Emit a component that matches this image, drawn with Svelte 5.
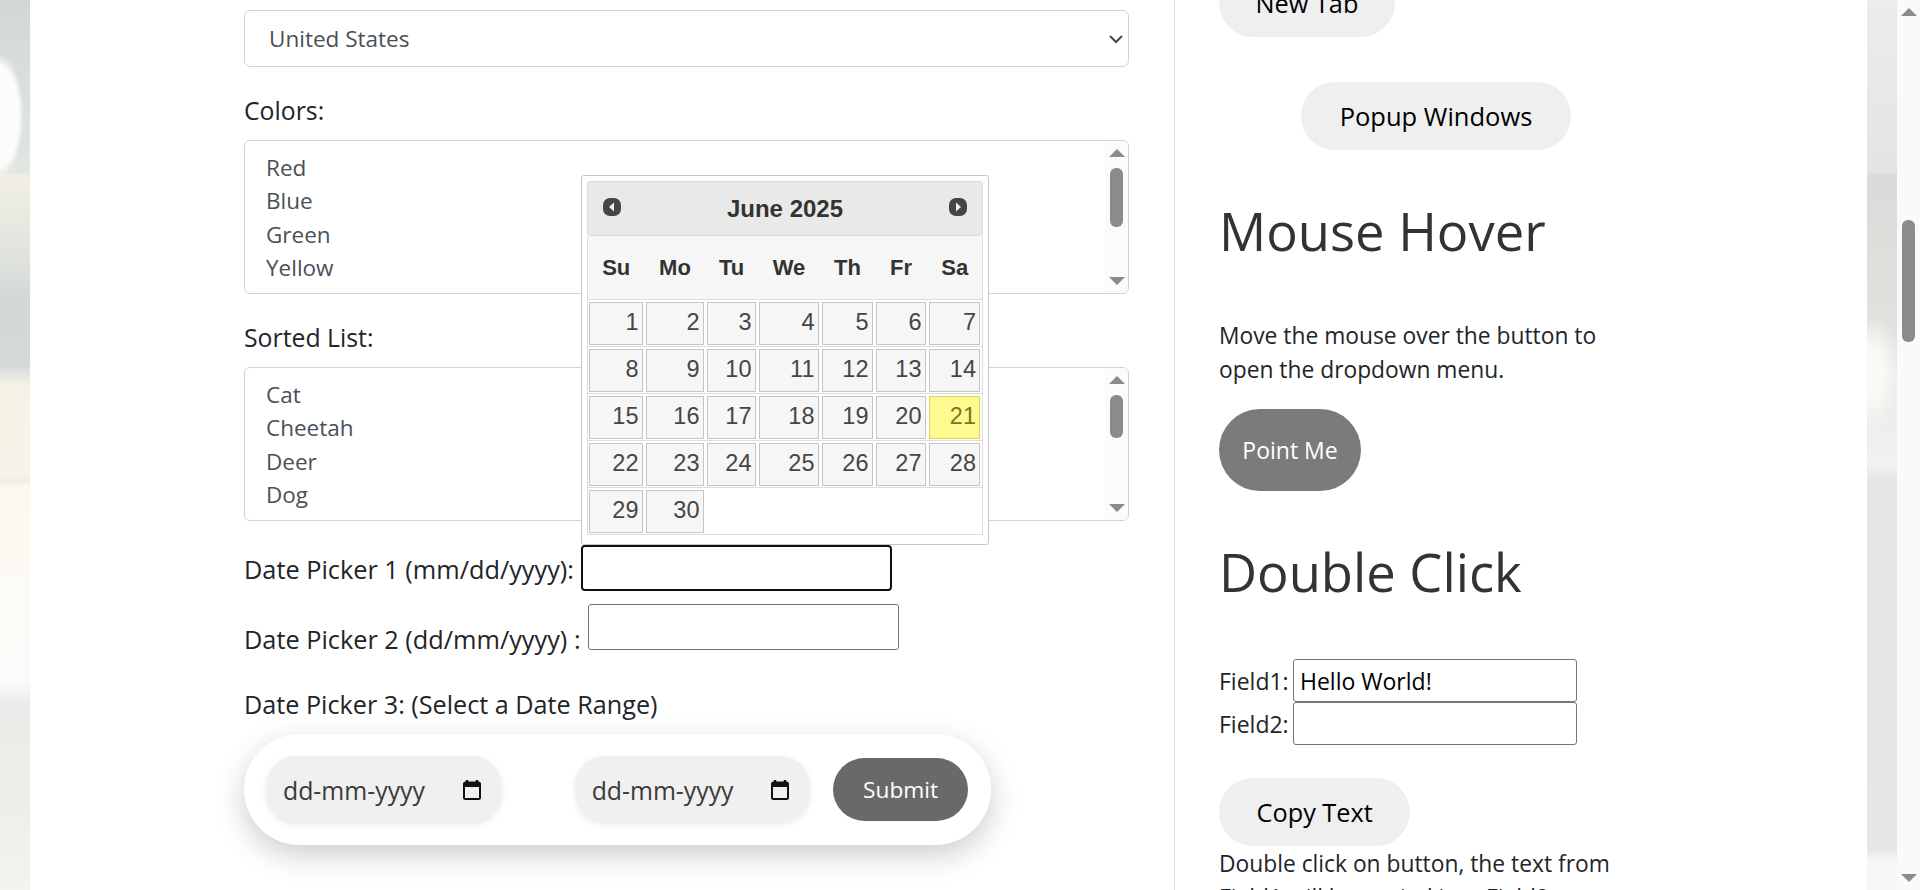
<script>
  const colors = ['Red', 'Blue', 'Green', 'Yellow', 'Pink'];
  const animals = ['Cat', 'Cheetah', 'Deer', 'Dog', 'Elephant'];
  const weekdays = ['Su', 'Mo', 'Tu', 'We', 'Th', 'Fr', 'Sa'];
  const colWidths = [57, 61, 52, 63, 54, 53, 55];

  // June 2025 starts on a Sunday, so the grid is just 1..30 in rows of seven
  const weeks = [];
  for (let d = 1; d <= 30; d += 7) {
    weeks.push(Array.from({ length: 7 }, (_, i) => (d + i <= 30 ? d + i : null)));
  }
</script>

<div class="screen">
  <div class="strip strip-left"></div>

  <main class="page">
    <section class="forms">
      <div class="select">
        <span>United States</span>
        <svg class="chevron" width="14" height="10" viewBox="0 0 14 10"><path d="M1 2l6 6 6-6" fill="none" stroke="#454b52" stroke-width="2"/></svg>
      </div>

      <div class="label">Colors:</div>
      <div class="listbox">
        <div class="options">
          {#each colors as c}<div>{c}</div>{/each}
        </div>
        <div class="mini-scroll">
          <i class="up"></i>
          <b class="thumb-a"></b>
          <i class="down"></i>
        </div>
      </div>

      <div class="label">Sorted List:</div>
      <div class="listbox">
        <div class="options">
          {#each animals as a}<div>{a}</div>{/each}
        </div>
        <div class="mini-scroll">
          <i class="up"></i>
          <b class="thumb-b"></b>
          <i class="down"></i>
        </div>
      </div>

      <div class="date-row first">
        <span>Date Picker 1 (mm/dd/yyyy):</span>
        <div class="text-input focused"></div>

        <div class="calendar">
          <div class="cal-head">
            <svg class="nav" width="20" height="20" viewBox="0 0 20 20"><rect x="1" y="1" width="18" height="18" rx="7" fill="#454545"/><path d="M12 5.500v9L7 10z" fill="#eee"/></svg>
            <span class="cal-title">June 2025</span>
            <svg class="nav" width="20" height="20" viewBox="0 0 20 20"><rect x="1" y="1" width="18" height="18" rx="7" fill="#454545"/><path d="M8 5.500v9l5-4.500z" fill="#eee"/></svg>
          </div>
          <table>
            <colgroup>
              {#each colWidths as w}<col style="width:{w}px" />{/each}
            </colgroup>
            <thead>
              <tr>{#each weekdays as d}<th>{d}</th>{/each}</tr>
            </thead>
            <tbody>
              {#each weeks as week}
                <tr>
                  {#each week as day}
                    <td>
                      {#if day}<a class:today={day === 21}>{day}</a>{/if}
                    </td>
                  {/each}
                </tr>
              {/each}
            </tbody>
          </table>
        </div>
      </div>

      <div class="date-row second">
        <span>Date Picker 2 (dd/mm/yyyy) :</span>
        <div class="text-input"></div>
      </div>

      <div class="label third">Date Picker 3: (Select a Date Range)</div>

      <div class="range">
        <div class="date-pill">
          <span>dd-mm-yyyy</span>
          <svg width="20" height="22" viewBox="0 0 20 22"><path d="M5 1v3M15 1v3" stroke="#111" stroke-width="2.500"/><rect x="2" y="3.500" width="16" height="16.500" rx="1.500" fill="none" stroke="#111" stroke-width="2"/><rect x="2" y="3.500" width="16" height="4.500" fill="#111"/></svg>
        </div>
        <div class="date-pill second-pill">
          <span>dd-mm-yyyy</span>
          <svg width="20" height="22" viewBox="0 0 20 22"><path d="M5 1v3M15 1v3" stroke="#111" stroke-width="2.500"/><rect x="2" y="3.500" width="16" height="16.500" rx="1.500" fill="none" stroke="#111" stroke-width="2"/><rect x="2" y="3.500" width="16" height="4.500" fill="#111"/></svg>
        </div>
        <div class="submit">Submit</div>
      </div>
    </section>

    <aside class="side">
      <div class="pill new-tab">New Tab</div>
      <div class="pill popup">Popup Windows</div>

      <h2 class="hover-title">Mouse Hover</h2>
      <p class="hover-text">Move the mouse over the button to open the dropdown menu.</p>
      <div class="point">Point Me</div>

      <h2 class="dbl-title">Double Click</h2>
      <div class="field-row"><span>Field1:</span><div class="field">Hello World!</div></div>
      <div class="field-row"><span>Field2:</span><div class="field"></div></div>
      <div class="pill copy">Copy Text</div>
      <p class="copy-text">Double click on button, the text from Field1 will be copied into Field2.</p>
    </aside>
  </main>

  <div class="strip strip-right"></div>

  <div class="scrollbar">
    <i class="up"></i>
    <b></b>
    <i class="down"></i>
  </div>
</div>

<style>
  :global(body) {
    margin: 0;
    background: #fff;
  }

  .screen {
    display: flex;
    height: 890px;
    overflow: hidden;
    font-family: "Open Sans", "Noto Sans", sans-serif;
    font-size: 22.500px;
    color: #212529;
  }

  /* blurred photo that shows behind the page */
  .strip {
    flex: 0 0 30px;
  }

  .strip-left {
    background:
      radial-gradient(ellipse 26px 62px at -2px 116px, #fbfdfb 0 80%, rgba(248, 252, 248, 0) 100%),
      linear-gradient(180deg, #d3d6d6 0, #d8dcdb 60px, #e2e6e2 172px, #f1efe4 176px, #dfe2dc 260px, #d2d8d8 300px, #d3d8d8 365px, #f6f2e6 385px, #f7f3e8 475px, #f0ede2 482px, #fcf8ee 486px, #fdf9f1 540px, #fbfbf7 610px, #fbfcfa 680px, #e9ece8 705px, #eceee9 800px, #f3f4f0 890px);
  }

  .strip-right {
    background:
      radial-gradient(ellipse 30px 56px at 4px 372px, #fbfbf6 0 35%, rgba(251, 251, 246, 0) 100%),
      linear-gradient(180deg, #ececec 0, #e4e4e4 172px, #dcdad8 176px, #e2e1de 320px, #ececea 400px, #f1f1ef 465px, #e5e5e3 480px, #e6e6e5 850px, #f5f6f5 860px);
  }

  .page {
    flex: 1;
    display: flex;
    min-width: 0;
    background: #fff;
  }

  .forms {
    position: relative;
    box-sizing: border-box;
    flex: 0 0 1145px;
    padding: 10px 45px 0 214px;
    border-right: 1.500px solid #dcdcdc;
  }

  .select {
    display: flex;
    align-items: center;
    justify-content: space-between;
    box-sizing: border-box;
    height: 57px;
    padding: 0 5px 0 24px;
    border: 1px solid #ced4da;
    border-radius: 6px;
    color: #495057;
  }

  .label {
    margin: 25px 0 12px;
    font-size: 24.800px;
    line-height: 36px;
  }

  .listbox {
    display: flex;
    box-sizing: border-box;
    height: 154px;
    border: 1px solid #ced4da;
    border-radius: 6px;
    overflow: hidden;
    color: #495057;
  }

  .options {
    flex: 1;
    padding: 9.500px 0 0 21px;
    line-height: 33.500px;
  }

  .mini-scroll {
    position: relative;
    display: flex;
    flex-direction: column;
    align-items: center;
    flex: 0 0 23px;
    background: #fbfbfb;
  }

  .mini-scroll b {
    width: 13px;
    border-radius: 6px;
    background: #8b8b8b;
  }

  .thumb-a {
    height: 59px;
    margin-top: 11px;
  }

  .thumb-b {
    height: 43px;
    margin-top: 11px;
  }

  .mini-scroll .down {
    margin-top: auto;
    margin-bottom: 8px;
  }

  .up,
  .down {
    display: block;
    width: 0;
    height: 0;
    border-left: 8px solid transparent;
    border-right: 8px solid transparent;
  }

  .up {
    margin-top: 8px;
    border-bottom: 8px solid #8b8b8b;
  }

  .down {
    border-top: 8px solid #8b8b8b;
  }

  .date-row {
    display: flex;
    align-items: flex-end;
  }

  .date-row.first {
    margin-top: 24px;
    gap: 7px;
  }

  .date-row.second {
    margin-top: 13px;
    gap: 6px;
  }

  .date-row > span {
    font-size: 25.300px;
    line-height: 36px;
    white-space: nowrap;
  }

  .first > span {
    width: 330px;
    margin-bottom: 4px;
  }

  .second > span {
    width: 338px;
    margin-bottom: -7px;
  }

  .text-input {
    box-sizing: border-box;
    width: 311px;
    height: 46px;
    border: 1px solid #767676;
    border-radius: 3px;
    background: #fff;
  }

  .text-input.focused {
    border: 2px solid #101010;
    border-radius: 4px;
  }

  .label.third {
    margin: 36px 0 12px;
    font-size: 25.200px;
  }

  .range {
    display: flex;
    align-items: center;
    box-sizing: border-box;
    width: 747px;
    height: 111px;
    padding: 0 23px 0 22px;
    border-radius: 56px;
    background: #fff;
    box-shadow: 0 10px 30px rgba(0, 0, 0, 0.2);
  }

  .date-pill {
    display: flex;
    align-items: center;
    justify-content: space-between;
    box-sizing: border-box;
    width: 236px;
    height: 67px;
    padding: 0 20px 0 17px;
    border-radius: 30px;
    background: #f0f0f0;
    box-shadow: 0 2px 6px rgba(0, 0, 0, 0.08);
    color: #3a3a3a;
    font-size: 24.800px;
  }

  .second-pill {
    margin-left: 73px;
  }

  .submit {
    display: flex;
    align-items: center;
    justify-content: center;
    width: 135px;
    height: 63px;
    margin-left: 23px;
    border-radius: 32px;
    background: #696969;
    color: #fff;
    font-size: 22.700px;
  }

  /* jQuery UI datepicker popup, open over the list boxes */
  .calendar {
    position: absolute;
    left: 551px;
    top: 175px;
    box-sizing: border-box;
    width: 408px;
    height: 370px;
    padding: 5px;
    border: 1px solid #c5c5c5;
    border-radius: 3px;
    background: #fff;
    font-family: "Liberation Sans", Arial, sans-serif;
    color: #333;
  }

  .cal-head {
    display: flex;
    align-items: center;
    justify-content: space-between;
    box-sizing: border-box;
    height: 55px;
    padding: 0 14px;
    border: 1px solid #ddd;
    border-radius: 3px;
    background: #e9e9e9;
  }

  .nav {
    margin-top: -4px;
  }

  .cal-title {
    font-size: 24px;
    font-weight: 700;
  }

  table {
    width: 396px;
    table-layout: fixed;
    border-collapse: collapse;
    border: 1px solid #ddd;
    border-top: 0;
  }

  th {
    height: 63px;
    padding: 0;
    background: #f6f6f6;
    font-size: 22px;
    font-weight: 700;
    border-bottom: 1px solid #ddd;
  }

  td {
    height: 46px;
    padding: 0 2px 0 1px;
    border-bottom: 1px solid #ddd;
  }

  tr:last-child td {
    border-bottom: 0;
  }

  td a {
    display: block;
    box-sizing: border-box;
    height: 43px;
    padding: 0 3px;
    border: 1px solid #c5c5c5;
    background: #f6f6f6;
    color: #454545;
    font-size: 23.500px;
    line-height: 39px;
    text-align: right;
  }

  td a.today {
    border-color: #dad55e;
    background: #fffa90;
    color: #777620;
  }

  .side {
    flex: 0 0 434px;
    display: flex;
    flex-direction: column;
    align-items: flex-start;
    margin-left: 44px;
  }

  .side > * {
    flex-shrink: 0;
  }

  .pill {
    box-sizing: border-box;
    height: 68px;
    padding: 0 37.500px;
    border-radius: 34px;
    background: #efefef;
    color: #000;
    line-height: 68px;
    font-size: 25.300px;
  }

  .new-tab {
    margin-top: -31px;
    padding: 0 36.500px;
  }

  .popup {
    align-self: center;
    margin-top: 45px;
    padding: 0 38.500px;
    font-size: 25.500px;
  }

  h2 {
    margin: 0;
    font-size: 52.500px;
    font-weight: 400;
    line-height: 70px;
    color: #333;
  }

  .hover-title {
    margin-top: 46px;
  }

  p {
    margin: 0;
    width: 400px;
    font-size: 22.800px;
    line-height: 34px;
  }

  .hover-text {
    margin-top: 53px;
  }

  .point {
    display: flex;
    align-items: center;
    justify-content: center;
    width: 142px;
    height: 82px;
    margin-top: 22px;
    border-radius: 41px;
    background: #7b7b7b;
    color: #fff;
    font-size: 23px;
  }

  .dbl-title {
    margin-top: 46px;
  }

  .field-row {
    display: flex;
    align-items: center;
    font-size: 23px;
  }

  .field-row span {
    width: 74px;
  }

  .dbl-title + .field-row {
    margin-top: 52px;
  }

  .field {
    box-sizing: border-box;
    width: 284px;
    height: 43px;
    padding-left: 6px;
    border: 1px solid #767676;
    border-radius: 3px;
    color: #000;
    line-height: 42px;
  }

  .copy {
    margin-top: 33px;
  }

  .copy-text {
    margin-top: 1px;
  }

  .scrollbar {
    flex: 0 0 23px;
    display: flex;
    flex-direction: column;
    align-items: center;
    background: #fafafa;
  }

  .scrollbar b {
    width: 13px;
    height: 122px;
    margin-top: 204px;
    border-radius: 6px;
    background: #8b8b8b;
  }

  .scrollbar .down {
    margin-top: auto;
    margin-bottom: 8px;
  }
</style>
